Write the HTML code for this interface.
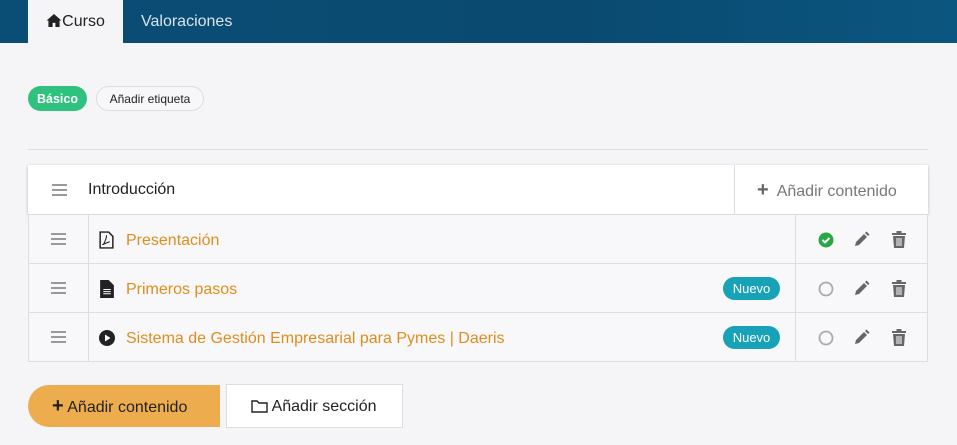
<!DOCTYPE html>
<html><head><meta charset="utf-8"><style>
*{box-sizing:border-box;margin:0;padding:0}
body{width:957px;height:445px;background:#f5f5f8;font-family:"Liberation Sans",sans-serif;position:relative;overflow:hidden;color:#222}
.hdr{position:absolute;left:0;top:0;width:957px;height:43px;background:linear-gradient(90deg,#0a4d75,#0a4a70 60%,#0b5680)}
.tab{position:absolute;top:0;height:43px;line-height:43px;font-size:16px}
.a{left:28px;width:95px;background:#f5f5f8;color:#222;text-align:center}
.v{left:141px;color:#d8e4ec}
.badge{position:absolute;top:86px;height:25px;line-height:25px;border-radius:13px;font-size:12px}
.hr{position:absolute;left:28px;top:149px;width:900px;height:1px;background:#dcdde2}
.sec{position:absolute;left:28px;top:165px;width:900px;height:49px;background:#fff;box-shadow:0 1px 3px rgba(0,0,0,.25)}
.row{position:absolute;left:28px;width:900px;height:50px;border:1px solid #dcdde2;background:#f8f8fa}
.cell{position:absolute;top:0;bottom:0;border-right:1px solid #dcdde2}
.ham{position:absolute;width:15px;height:12px;border-top:2px solid #999;border-bottom:2px solid #999}
.ham:after{content:"";position:absolute;left:0;right:0;top:3px;height:2px;background:#999}
.t{position:absolute;left:97px;font-size:16px;color:#e08c1a;top:17px}
.nuevo{position:absolute;left:694px;top:13px;width:57px;height:23px;border-radius:12px;background:#17a2b8;color:#fff;font-size:13px;text-align:center;line-height:23px}
.ic{position:absolute;top:16px}
</style></head><body>
<div class="hdr"></div>
<div class="tab a"><svg width="16" height="13" viewBox="0 0 16 14" style="vertical-align:-1px"><path d="M8 0L0 7h2v7h4.5V9.5h3V14H14V7h2z" fill="#222"/></svg>Curso</div>
<div class="tab v">Valoraciones</div>
<div class="badge" style="left:28px;width:59px;background:#2fc27f;color:#fff;font-weight:bold;text-align:center;font-size:12.5px;line-height:26px">Básico</div>
<div class="badge" style="left:96px;width:108px;border:1px solid #ddd;background:#f7f7f9;text-align:center;color:#222">Añadir etiqueta</div>
<div class="hr"></div>
<div class="sec">
<div class="ham" style="left:24px;top:19px"></div>
<div style="position:absolute;left:60px;top:16px;font-size:16px">Introducción</div>
<div style="position:absolute;left:706px;top:0;bottom:0;border-left:1px solid #dcdde2;width:194px;color:#777;font-size:16px;line-height:50px;padding-left:22px"><b style="font-size:20px;color:#666">+</b>&nbsp; Añadir contenido</div>
</div>

<div class="row" style="top:214px">
<div class="cell" style="left:0;width:60px"><div class="ham" style="left:22px;top:18px"></div></div>
<svg class="ic" style="left:70px" width="15" height="18" viewBox="0 0 14 17"><path d="M1 1h8l4 4v11H1z" fill="none" stroke="#222" stroke-width="1.4"/><path d="M4 13c2-4 3-6 3-9M3 13l7-3" stroke="#222" fill="none"/></svg>
<div class="t">Presentación</div>
<div class="cell" style="left:766px;width:0"></div>
<svg class="ic" style="left:789px;top:17px" width="16" height="16"><circle cx="8" cy="8" r="7.5" fill="#28a745"/><path d="M4.5 8l2.5 2.5 4.5-4.5" stroke="#fff" stroke-width="2" fill="none"/></svg>
<svg class="ic" style="left:825px" width="16" height="16"><path d="M1 15l1-4 8-8 3 3-8 8z" fill="#666"/><path d="M11 2l1.5-1.5 3 3L14 5z" fill="#666"/></svg>
<svg class="ic" style="left:863px" width="14" height="17"><path d="M0 2h14v2H0zM4.5 0h5v2h-5zM1 5h12l-1 12H2z" fill="#666"/><path d="M5 7v8M7 7v8M9 7v8" stroke="#fff"/></svg>
</div>

<div class="row" style="top:263px">
<div class="cell" style="left:0;width:60px"><div class="ham" style="left:22px;top:18px"></div></div>
<svg class="ic" style="left:71px" width="14" height="18" viewBox="0 0 13 17"><path d="M0 0h8l5 5v12H0z" fill="#222"/><path d="M3 9h7M3 11h7M3 13h7" stroke="#fff"/></svg>
<div class="t">Primeros pasos</div>
<div class="nuevo">Nuevo</div>
<div class="cell" style="left:766px;width:0"></div>
<svg class="ic" style="left:789px;top:17px" width="16" height="16"><circle cx="8" cy="8" r="6.5" fill="none" stroke="#aaa" stroke-width="1.8"/></svg>
<svg class="ic" style="left:825px" width="16" height="16"><path d="M1 15l1-4 8-8 3 3-8 8z" fill="#666"/><path d="M11 2l1.5-1.5 3 3L14 5z" fill="#666"/></svg>
<svg class="ic" style="left:863px" width="14" height="17"><path d="M0 2h14v2H0zM4.5 0h5v2h-5zM1 5h12l-1 12H2z" fill="#666"/><path d="M5 7v8M7 7v8M9 7v8" stroke="#fff"/></svg>
</div>

<div class="row" style="top:312px">
<div class="cell" style="left:0;width:60px"><div class="ham" style="left:22px;top:18px"></div></div>
<svg class="ic" style="left:70px;top:17px" width="16" height="16"><circle cx="8" cy="8" r="8" fill="#222"/><path d="M6 4.5v7l5.5-3.5z" fill="#fff"/></svg>
<div class="t">Sistema de Gestión Empresarial para Pymes | Daeris</div>
<div class="nuevo">Nuevo</div>
<div class="cell" style="left:766px;width:0"></div>
<svg class="ic" style="left:789px;top:17px" width="16" height="16"><circle cx="8" cy="8" r="6.5" fill="none" stroke="#aaa" stroke-width="1.8"/></svg>
<svg class="ic" style="left:825px" width="16" height="16"><path d="M1 15l1-4 8-8 3 3-8 8z" fill="#666"/><path d="M11 2l1.5-1.5 3 3L14 5z" fill="#666"/></svg>
<svg class="ic" style="left:863px" width="14" height="17"><path d="M0 2h14v2H0zM4.5 0h5v2h-5zM1 5h12l-1 12H2z" fill="#666"/><path d="M5 7v8M7 7v8M9 7v8" stroke="#fff"/></svg>
</div>

<div style="position:absolute;left:28px;top:385px;width:192px;height:42px;background:#edad4e;border-radius:21px 0 0 21px;font-size:16px;line-height:42px;padding-left:24px;color:#222"><b style="font-size:20px">+</b> Añadir contenido</div>
<div style="position:absolute;left:226px;top:384px;width:177px;height:44px;background:#fff;border:1px solid #ddd;font-size:16px;line-height:44px;padding-left:24px;color:#222"><svg width="17" height="14" style="vertical-align:-2px"><path d="M1 2h5l2 2h8v9H1z" fill="none" stroke="#222" stroke-width="1.4"/></svg> Añadir sección</div>
</body></html>
